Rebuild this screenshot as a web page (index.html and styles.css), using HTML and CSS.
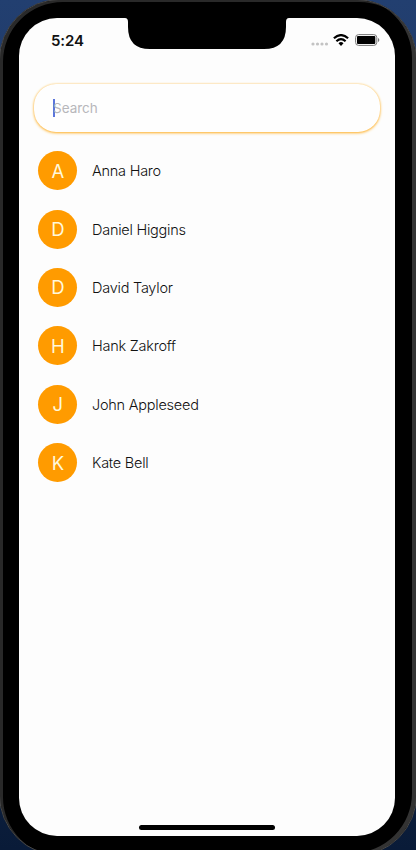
FILE: index.html
```html
<!DOCTYPE html>
<html lang="en">
<head>
<meta charset="utf-8">
<title>Contacts</title>
<link rel="stylesheet" href="styles.css">
</head>
<body>
<div class="phone">
  <main class="screen">
    <div class="notch"><svg width="164" height="32" viewBox="0 0 164 32"><path d="M0 0Q3 0 3 4V9Q3 31 25 31H139Q161 31 161 9V4Q161 0 164 0Z"/></svg></div>
    <header class="status">
      <span class="time">5:24</span>
      <span class="indicators">
        <svg class="signal" width="18" height="4" viewBox="0 0 18 4" fill="#c3c3c3"><circle cx="2" cy="2" r="1.6"/><circle cx="6.5" cy="2" r="1.6"/><circle cx="11" cy="2" r="1.6"/><circle cx="15.5" cy="2" r="1.6"/></svg>
        <svg class="wifi" width="16" height="12" viewBox="0 0 16 12" fill="none" stroke="#000" stroke-width="2.2"><path d="M.9 4.3Q8-2.1 15.1 4.3M3.4 7.2Q8 3 12.6 7.2"/><path d="M5.5 9.2Q8 7 10.5 9.2L8 11.9Z" fill="#000" stroke="none"/></svg>
        <svg class="battery" width="25" height="12" viewBox="0 0 25 12"><rect x=".6" y=".6" width="21.2" height="10.8" rx="3" fill="none" stroke="#777" stroke-width="1"/><rect x="2" y="2" width="18.3" height="8" rx="1"/><path d="M23 4Q24.3 4.4 24.3 6T23 8Z" fill="#777"/></svg>
      </span>
    </header>
    <label class="search"><span class="caret"></span><span class="placeholder">Search</span></label>
    <ul class="contacts">
      <li><span class="avatar">A</span><span class="name">Anna Haro</span></li>
      <li><span class="avatar">D</span><span class="name">Daniel Higgins</span></li>
      <li><span class="avatar">D</span><span class="name">David Taylor</span></li>
      <li><span class="avatar">H</span><span class="name">Hank Zakroff</span></li>
      <li><span class="avatar">J</span><span class="name">John Appleseed</span></li>
      <li><span class="avatar">K</span><span class="name">Kate Bell</span></li>
    </ul>
    <div class="home"></div>
  </main>
</div>
</body>
</html>
```
FILE: styles.css
```css
* { box-sizing: border-box; }
body {
  margin: 0;
  width: 416px;
  height: 850px;
  overflow: hidden;
  background: linear-gradient(#223f70, #1b3158 50%, #091b38);
  font-family: Inter, "Liberation Sans", sans-serif;
  color: #111;
}
.phone {
  width: 418px;
  height: 857px;
  margin: -1px 0 0 -1px;
  padding: 18px 0 0 19px;
  border: 1px solid #484848;
  border-radius: 61px;
  background: #000;
  box-shadow: inset 3px 2px 0 #292929, inset -4px -2px 0 #333;
}
.screen {
  position: relative;
  display: flex;
  flex-direction: column;
  width: 376px;
  height: 818px;
  border-radius: 38px;
  background: #fdfdfd;
  overflow: hidden;
}
.notch { position: absolute; top: 0; left: 106px; height: 32px; }
.notch svg { display: block; }
.status {
  display: flex;
  align-items: center;
  justify-content: space-between;
  height: 44px;
  padding: 0 16px 0 32px;
}
.time { margin-top: 1px; font-size: 15px; font-weight: 600; line-height: 18px; letter-spacing: -.1px; }
.indicators { display: flex; align-items: center; }
.signal { margin: 8px 4px 0 0; }
.wifi { margin-right: 6px; }
.battery { margin-right: -1px; }
.search {
  display: flex;
  align-items: center;
  width: 346px;
  height: 48px;
  margin: 22px 0 0 15px;
  padding-left: 19px;
  border-radius: 22px;
  background: #fefefe;
  box-shadow: 0 1px 3px #ffb02a, 0 0 2px #ffd890;
}
.caret { width: 2px; height: 18px; margin-right: -2px; background: #5b75dc; }
.placeholder { color: #b7b7bb; font-size: 13.5px; }
.contacts {
  display: grid;
  grid-auto-rows: 58.4px;
  margin: 9.5px 0 0;
  padding: 0 0 0 19.4px;
  list-style: none;
}
.contacts li { display: flex; align-items: center; gap: 14.6px; }
.avatar {
  display: grid;
  place-items: center;
  width: 39px;
  height: 39px;
  border-radius: 50%;
  background: #ff9b00;
  color: #fff8dc;
  font-size: 18.5px;
  font-weight: 400;
}
.name { font-size: 14.5px; font-weight: 350; letter-spacing: -.24px; white-space: nowrap; }
.home {
  width: 136px;
  height: 5px;
  margin: auto auto 6px 120px;
  border-radius: 3px;
  background: #000;
}
```
